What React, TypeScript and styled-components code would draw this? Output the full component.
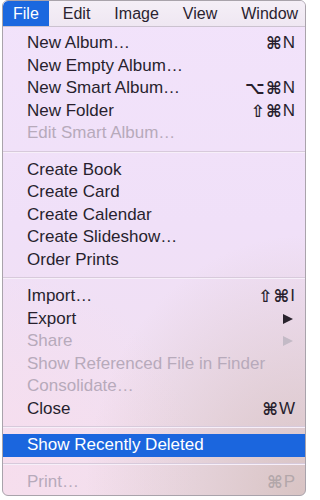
import styled, { createGlobalStyle } from "styled-components";

const GlobalStyle = createGlobalStyle`
  html, body {
    margin: 0;
    padding: 0;
    background: #ffffff;
  }
  body {
    font-family: "Liberation Sans", Arial, "DejaVu Sans", sans-serif;
  }
`;

const Window = styled.div`
  box-sizing: border-box;
  width: 304px;
  height: 496px;
  margin-left: 2px;
  border: 1px solid #a9a3ab;
  border-radius: 6px;
  overflow: hidden;
  display: flex;
  flex-direction: column;
  background:
    radial-gradient(ellipse 220px 260px at 100% 100%, rgba(196, 172, 160, 0.55), rgba(196, 172, 160, 0) 100%),
    radial-gradient(ellipse 200px 200px at 0% 95%, rgba(250, 220, 236, 0.6), rgba(250, 220, 236, 0) 100%),
    linear-gradient(to bottom, #f2e3fb 0%, #f0e0f8 45%, #f1e0ee 100%);
`;

const MenuBar = styled.div`
  display: flex;
  align-items: stretch;
  gap: 4px;
  height: 25px;
  flex-shrink: 0;
  border-bottom: 1px solid #cbc2cf;
  background: linear-gradient(to bottom, #f5eff7, #efe7f2);
`;

const MenuTitle = styled.div<{ $active?: boolean }>`
  display: flex;
  align-items: center;
  padding: 0 10px;
  font-size: 16px;
  color: ${(props) => (props.$active ? "#ffffff" : "#2a2330")};
  background: ${(props) => (props.$active ? "#1b68df" : "transparent")};
  border-radius: ${(props) => (props.$active ? "5px 0 0 0" : "0")};
`;

const MenuList = styled.div`
  display: flex;
  flex-direction: column;
  padding: 5px 0 2px;
`;

const Item = styled.div<{ $disabled?: boolean; $selected?: boolean }>`
  display: flex;
  align-items: center;
  justify-content: space-between;
  height: 22.5px;
  padding: 0 10px 0 24px;
  font-size: 17px;
  color: ${(props) =>
    props.$selected ? "#ffffff" : props.$disabled ? "#b7aabb" : "#281f2e"};
  background: ${(props) => (props.$selected ? "#1b66de" : "transparent")};
  white-space: nowrap;
`;

const Shortcut = styled.span<{ $disabled?: boolean }>`
  display: flex;
  align-items: center;
  font-size: 17px;
  color: ${(props) => (props.$disabled ? "#b3a7aa" : "#281f2e")};
`;

const Symbol = styled.span`
  font-family: "DejaVu Sans", sans-serif;
  font-size: 17px;
  font-weight: bold;
  letter-spacing: 1px;
`;

const SubArrow = styled.span<{ $disabled?: boolean }>`
  width: 0;
  height: 0;
  margin-right: 2px;
  border-top: 5px solid transparent;
  border-bottom: 5px solid transparent;
  border-left: 10px solid ${(props) => (props.$disabled ? "#c3bac6" : "#29232d")};
`;

const Separator = styled.div`
  height: 0;
  margin: 6px 0;
  border-top: 1px solid #d7cadb;
  border-bottom: 1px solid #f7eff9;
`;

type Entry =
  | { kind: "sep" }
  | {
      kind: "item";
      label: string;
      keys?: string;
      mods?: string;
      sub?: boolean;
      disabled?: boolean;
      selected?: boolean;
    };

const entries: Entry[] = [
  { kind: "item", label: "New Album…", mods: "⌘", keys: "N" },
  { kind: "item", label: "New Empty Album…" },
  { kind: "item", label: "New Smart Album…", mods: "⌥⌘", keys: "N" },
  { kind: "item", label: "New Folder", mods: "⇧⌘", keys: "N" },
  { kind: "item", label: "Edit Smart Album…", disabled: true },
  { kind: "sep" },
  { kind: "item", label: "Create Book" },
  { kind: "item", label: "Create Card" },
  { kind: "item", label: "Create Calendar" },
  { kind: "item", label: "Create Slideshow…" },
  { kind: "item", label: "Order Prints" },
  { kind: "sep" },
  { kind: "item", label: "Import…", mods: "⇧⌘", keys: "I" },
  { kind: "item", label: "Export", sub: true },
  { kind: "item", label: "Share", sub: true, disabled: true },
  { kind: "item", label: "Show Referenced File in Finder", disabled: true },
  { kind: "item", label: "Consolidate…", disabled: true },
  { kind: "item", label: "Close", mods: "⌘", keys: "W" },
  { kind: "sep" },
  { kind: "item", label: "Show Recently Deleted", selected: true },
  { kind: "sep" },
  { kind: "item", label: "Print…", mods: "⌘", keys: "P", disabled: true },
];

const titles = ["File", "Edit", "Image", "View", "Window"];

function App() {
  return (
    <>
      <GlobalStyle />
      <Window>
        <MenuBar>
          {titles.map((t, i) => (
            <MenuTitle key={t} $active={i === 0}>
              {t}
            </MenuTitle>
          ))}
        </MenuBar>
        <MenuList>
          {entries.map((e, i) =>
            e.kind === "sep" ? (
              <Separator key={i} />
            ) : (
              <Item key={i} $disabled={e.disabled} $selected={e.selected}>
                <span>{e.label}</span>
                {e.keys && (
                  <Shortcut $disabled={e.disabled}>
                    <Symbol>{e.mods}</Symbol>
                    {e.keys}
                  </Shortcut>
                )}
                {e.sub && <SubArrow $disabled={e.disabled} />}
              </Item>
            )
          )}
        </MenuList>
      </Window>
    </>
  );
}

export default App;
